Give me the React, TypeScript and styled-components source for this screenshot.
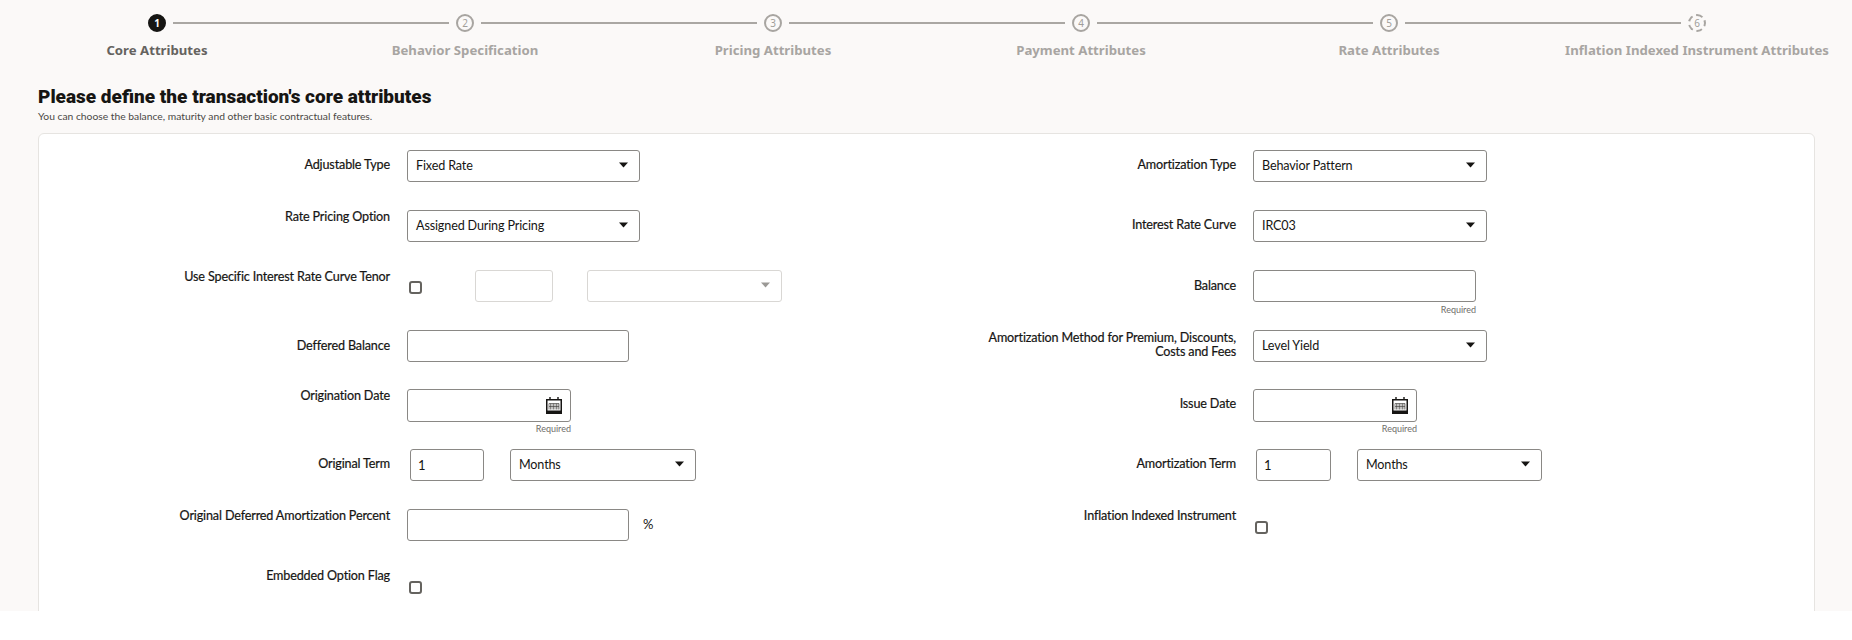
import styled, { createGlobalStyle } from 'styled-components';

const GlobalStyle = createGlobalStyle`
  html, body {
    margin: 0;
    padding: 0;
    background: #fff;
    font-family: Lato, "Liberation Sans", sans-serif;
    color: #161513;
  }
`;

const Page = styled.div`
  height: 611px;
  overflow: hidden;
  background: #fbf9f8;
`;

const Train = styled.div`
  display: grid;
  grid-template-columns: repeat(6, 308px);
  padding: 14px 0 0 3px;
`;

const Step = styled.div`
  display: flex;
  flex-direction: column;
  align-items: center;
`;

const Track = styled.div`
  display: flex;
  align-items: center;
  gap: 7px;
  width: 100%;
  height: 18px;
`;

const Line = styled.div<{ $hidden?: boolean }>`
  flex: 1;
  height: 2px;
  background: ${(p) => (p.$hidden ? 'transparent' : '#aaa7a3')};
`;

const Dot = styled.div<{ $active?: boolean; $dashed?: boolean }>`
  box-sizing: border-box;
  width: 18px;
  height: 18px;
  border-radius: 50%;
  display: flex;
  align-items: center;
  justify-content: center;
  font-family: "Noto Sans", sans-serif;
  font-size: 10px;
  font-weight: ${(p) => (p.$active ? 700 : 400)};
  color: ${(p) => (p.$active ? '#fff' : '#a19e9a')};
  background: ${(p) => (p.$active ? '#161513' : 'transparent')};
  border: 2px ${(p) => (p.$dashed ? 'dashed' : 'solid')} ${(p) => (p.$active ? '#161513' : '#a8a5a1')};
`;

const StepLabel = styled.div<{ $active?: boolean }>`
  margin-top: 8px;
  font-family: "Noto Sans", sans-serif;
  font-size: 13.2px;
  line-height: 20px;
  font-weight: 700;
  white-space: nowrap;
  color: ${(p) => (p.$active ? '#65635f' : '#a8a5a2')};
`;

const Heading = styled.div`
  padding: 25px 0 0 38px;
`;

const Title = styled.h1`
  margin: 0;
  font-family: Roboto, sans-serif;
  font-size: 19px;
  line-height: 24px;
  font-weight: 900;
  color: #161513;
`;

const Subtitle = styled.p`
  margin: 0;
  font-size: 10.3px;
  line-height: 14px;
  color: #4a4845;
`;

const Card = styled.div`
  margin: 10px 37px 0 38px;
  padding: 16px 0 0;
  height: 640px;
  background: #fff;
  border: 1px solid #e6e4e1;
  border-radius: 6px;
`;

const FormGrid = styled.div`
  display: grid;
  grid-template-columns: 846px 1fr;
  grid-template-rows: 60px 60px 60px 59px 60px 60px 60px 60px;
`;

const Row = styled.div`
  display: flex;
  align-items: flex-start;
`;

const Label = styled.label<{ $top: number }>`
  flex: none;
  box-sizing: border-box;
  width: 351px;
  margin-right: 17px;
  padding-top: ${(p) => p.$top}px;
  text-align: right;
  font-size: 12.6px;
  letter-spacing: -0.15px;
  line-height: 14px;
  -webkit-text-stroke: 0.2px #161513;
  color: #161513;
`;

const FieldStack = styled.div`
  display: flex;
  flex-direction: column;
  align-items: flex-end;
`;

const TextBox = styled.input<{ $w: number; $ml?: number; $disabled?: boolean }>`
  box-sizing: border-box;
  width: ${(p) => p.$w}px;
  height: 32px;
  margin: 0 0 0 ${(p) => p.$ml ?? 0}px;
  padding: 0 7px;
  background: #fff;
  border: 1px solid ${(p) => (p.$disabled ? '#d9d7d4' : '#8a8885')};
  border-radius: 3px;
  font: 13px Lato, "Liberation Sans", sans-serif;
  color: #161513;
  outline: none;
`;

const SelectBox = styled.div<{ $w: number; $ml?: number; $disabled?: boolean }>`
  box-sizing: border-box;
  display: flex;
  align-items: center;
  justify-content: space-between;
  width: ${(p) => p.$w}px;
  height: 32px;
  margin-left: ${(p) => p.$ml ?? 0}px;
  padding: 0 11px 2px 8px;
  background: #fff;
  border: 1px solid ${(p) => (p.$disabled ? '#d9d7d4' : '#8a8885')};
  border-radius: 3px;
  font-size: 12.6px;
  letter-spacing: -0.15px;
  color: #161513;
`;

const DateBox = styled.div`
  box-sizing: border-box;
  display: flex;
  align-items: center;
  justify-content: flex-end;
  width: 164px;
  height: 33px;
  padding-right: 8px;
  background: #fff;
  border: 1px solid #8a8885;
  border-radius: 3px;
`;

const Hint = styled.div<{ $mt: number }>`
  margin-top: ${(p) => p.$mt}px;
  font-size: 9px;
  line-height: 12px;
  color: #6f6d6a;
`;

const Check = styled.input<{ $top: number; $ml: number }>`
  appearance: none;
  box-sizing: border-box;
  flex: none;
  width: 13px;
  height: 13px;
  margin: ${(p) => p.$top}px 0 0 ${(p) => p.$ml}px;
  background: #fff;
  border: 2px solid #65635f;
  border-radius: 3px;
`;

const Unit = styled.span`
  margin: 8px 0 0 14px;
  font-size: 13px;
  line-height: 15px;
`;

const Caret = ({ color = '#161513' }: { color?: string }) => (
  <svg width="9" height="6" viewBox="0 0 9 6">
    <path d="M0 0.5h9L4.5 5.5z" fill={color} />
  </svg>
);

const CalendarIcon = () => (
  <svg width="16" height="17" viewBox="0 0 16 17">
    <path d="M4 0v4M12 0v4" stroke="#161513" strokeWidth="1.4" fill="none" />
    <rect x="0.75" y="2.75" width="14.5" height="13.5" fill="#fff" stroke="#161513" strokeWidth="1.5" />
    <rect x="1" y="13.5" width="14" height="2.5" fill="#161513" />
    <path
      d="M3 6.5v6M4.5 6.5v6M6 6.5v6M7.5 6.5v6M9 6.5v6M10.5 6.5v6M12 6.5v6M13 6.5v6M3 6.5h10M3 9.5h10"
      stroke="#3d3b38a0"
      strokeWidth="1"
      fill="none"
    />
  </svg>
);

const steps = [
  'Core Attributes',
  'Behavior Specification',
  'Pricing Attributes',
  'Payment Attributes',
  'Rate Attributes',
  'Inflation Indexed Instrument Attributes',
];

const App = () => (
  <>
    <GlobalStyle />
    <Page>
      <Train>
        {steps.map((name, i) => (
          <Step key={name}>
            <Track>
              <Line $hidden={i === 0} />
              <Dot $active={i === 0} $dashed={i === 5}>
                {i + 1}
              </Dot>
              <Line $hidden={i === 5} />
            </Track>
            <StepLabel $active={i === 0}>{name}</StepLabel>
          </Step>
        ))}
      </Train>

      <Heading>
        <Title>Please define the transaction's core attributes</Title>
        <Subtitle>You can choose the balance, maturity and other basic contractual features.</Subtitle>
      </Heading>

      <Card>
        <FormGrid>
          <Row>
            <Label $top={8}>Adjustable Type</Label>
            <SelectBox $w={233}>
              Fixed Rate
              <Caret />
            </SelectBox>
          </Row>
          <Row>
            <Label $top={8}>Amortization Type</Label>
            <SelectBox $w={234}>
              Behavior Pattern
              <Caret />
            </SelectBox>
          </Row>

          <Row>
            <Label $top={-1}>Rate Pricing Option</Label>
            <SelectBox $w={233}>
              Assigned During Pricing
              <Caret />
            </SelectBox>
          </Row>
          <Row>
            <Label $top={8}>Interest Rate Curve</Label>
            <SelectBox $w={234}>
              IRC03
              <Caret />
            </SelectBox>
          </Row>

          <Row>
            <Label $top={-1}>Use Specific Interest Rate Curve Tenor</Label>
            <Check type="checkbox" $top={11} $ml={2} />
            <TextBox $w={78} $ml={53} $disabled />
            <SelectBox $w={195} $ml={34} $disabled>
              <span />
              <Caret color="#9b9996" />
            </SelectBox>
          </Row>
          <Row>
            <Label $top={9}>Balance</Label>
            <FieldStack>
              <TextBox $w={223} />
              <Hint $mt={2}>Required</Hint>
            </FieldStack>
          </Row>

          <Row>
            <Label $top={9}>Deffered Balance</Label>
            <TextBox $w={222} />
          </Row>
          <Row>
            <Label $top={1}>
              Amortization Method for Premium, Discounts,
              <br />
              Costs and Fees
            </Label>
            <SelectBox $w={234}>
              Level Yield
              <Caret />
            </SelectBox>
          </Row>

          <Row>
            <Label $top={0}>Origination Date</Label>
            <FieldStack>
              <DateBox>
                <CalendarIcon />
              </DateBox>
              <Hint $mt={1}>Required</Hint>
            </FieldStack>
          </Row>
          <Row>
            <Label $top={8}>Issue Date</Label>
            <FieldStack>
              <DateBox>
                <CalendarIcon />
              </DateBox>
              <Hint $mt={1}>Required</Hint>
            </FieldStack>
          </Row>

          <Row>
            <Label $top={8}>Original Term</Label>
            <TextBox $w={74} $ml={3} defaultValue="1" />
            <SelectBox $w={186} $ml={26}>
              Months
              <Caret />
            </SelectBox>
          </Row>
          <Row>
            <Label $top={8}>Amortization Term</Label>
            <TextBox $w={75} $ml={3} defaultValue="1" />
            <SelectBox $w={185} $ml={26}>
              Months
              <Caret />
            </SelectBox>
          </Row>

          <Row>
            <Label $top={0}>Original Deferred Amortization Percent</Label>
            <TextBox $w={222} />
            <Unit>%</Unit>
          </Row>
          <Row>
            <Label $top={0}>Inflation Indexed Instrument</Label>
            <Check type="checkbox" $top={12} $ml={2} />
          </Row>

          <Row>
            <Label $top={0}>Embedded Option Flag</Label>
            <Check type="checkbox" $top={12} $ml={2} />
          </Row>
          <Row />
        </FormGrid>
      </Card>
    </Page>
  </>
);

export default App;
